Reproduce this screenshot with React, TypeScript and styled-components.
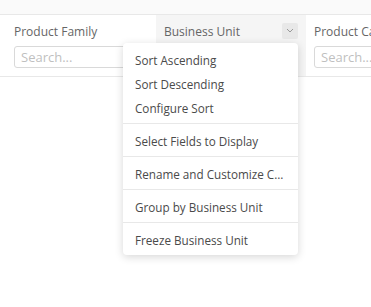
import styled, { createGlobalStyle } from 'styled-components';

const GlobalStyle = createGlobalStyle`
  html, body {
    margin: 0;
    padding: 0;
    background: #ffffff;
    font-family: 'Open Sans', 'Noto Sans', sans-serif;
  }
`;

const Page = styled.div`
  width: 371px;
  height: 307px;
  overflow: hidden;
  position: relative;
  background: #ffffff;
`;

const TopBand = styled.div`
  height: 14px;
  background: #fafafa;
  border-bottom: 1px solid #e8e8e8;
`;

const HeaderRow = styled.div`
  display: grid;
  grid-template-columns: 156px 150px 160px;
  height: 61px;
  border-bottom: 1px solid #e8e8e8;
`;

const HeaderCell = styled.div<{ $active?: boolean; $first?: boolean }>`
  position: relative;
  display: flex;
  flex-direction: column;
  padding: 0 8px 0 ${(p) => (p.$first ? '14px' : '8px')};
  background: ${(p) => (p.$active ? '#f5f5f5' : '#ffffff')};
`;

const LabelRow = styled.div`
  display: flex;
  align-items: center;
  justify-content: space-between;
  height: 30px;
  padding-top: 1px;
`;

const Label = styled.span`
  font-size: 12px;
  color: #666666;
  white-space: nowrap;
`;

const MenuButton = styled.span`
  display: flex;
  align-items: center;
  justify-content: center;
  width: 16px;
  height: 16px;
  margin-top: -1px;
  border-radius: 2px;
  background: #e8e8e8;
  color: #999999;
`;

const SearchInput = styled.input`
  box-sizing: border-box;
  width: 100%;
  height: 22px;
  margin: 0;
  padding: 0 6px;
  border: 1px solid #d9d9d9;
  border-radius: 3px;
  font-family: 'Open Sans', 'Noto Sans', sans-serif;
  font-size: 13px;
  color: #333333;
  outline: none;
  background: #ffffff;

  &::placeholder {
    color: #bfbfbf;
  }
`;

const Menu = styled.div`
  position: absolute;
  left: 123px;
  top: 43px;
  width: 175px;
  background: #ffffff;
  border-radius: 4px;
  box-shadow: 0 2px 8px rgba(0, 0, 0, 0.16);
`;

const MenuGroup = styled.div`
  padding: 4px 0;
  & + & {
    border-top: 1px solid #e8e8e8;
  }
`;

const MenuItem = styled.div`
  height: 23px;
  padding: 1px 12px 0;
  line-height: 24px;
  font-size: 11.7px;
  color: #4a4a4a;
  white-space: nowrap;
  overflow: hidden;
  text-overflow: ellipsis;
`;

const groups = [
  ['Sort Ascending', 'Sort Descending', 'Configure Sort'],
  ['Select Fields to Display'],
  ['Rename and Customize Column'],
  ['Group by Business Unit'],
  ['Freeze Business Unit'],
];

export default function App() {
  return (
    <Page>
      <GlobalStyle />
      <TopBand />
      <HeaderRow>
        <HeaderCell $first>
          <LabelRow>
            <Label>Product Family</Label>
          </LabelRow>
          <SearchInput placeholder="Search..." />
        </HeaderCell>
        <HeaderCell $active>
          <LabelRow>
            <Label>Business Unit</Label>
            <MenuButton>
              <svg width="8" height="5" viewBox="0 0 8 5" fill="none">
                <path d="M1 1l3 3 3-3" stroke="currentColor" strokeWidth="1" />
              </svg>
            </MenuButton>
          </LabelRow>
        </HeaderCell>
        <HeaderCell>
          <LabelRow>
            <Label>Product Category</Label>
          </LabelRow>
          <SearchInput placeholder="Search..." />
        </HeaderCell>
      </HeaderRow>
      <Menu>
        {groups.map((g, i) => (
          <MenuGroup key={i}>
            {g.map((item) => (
              <MenuItem key={item}>{item}</MenuItem>
            ))}
          </MenuGroup>
        ))}
      </Menu>
    </Page>
  );
}
